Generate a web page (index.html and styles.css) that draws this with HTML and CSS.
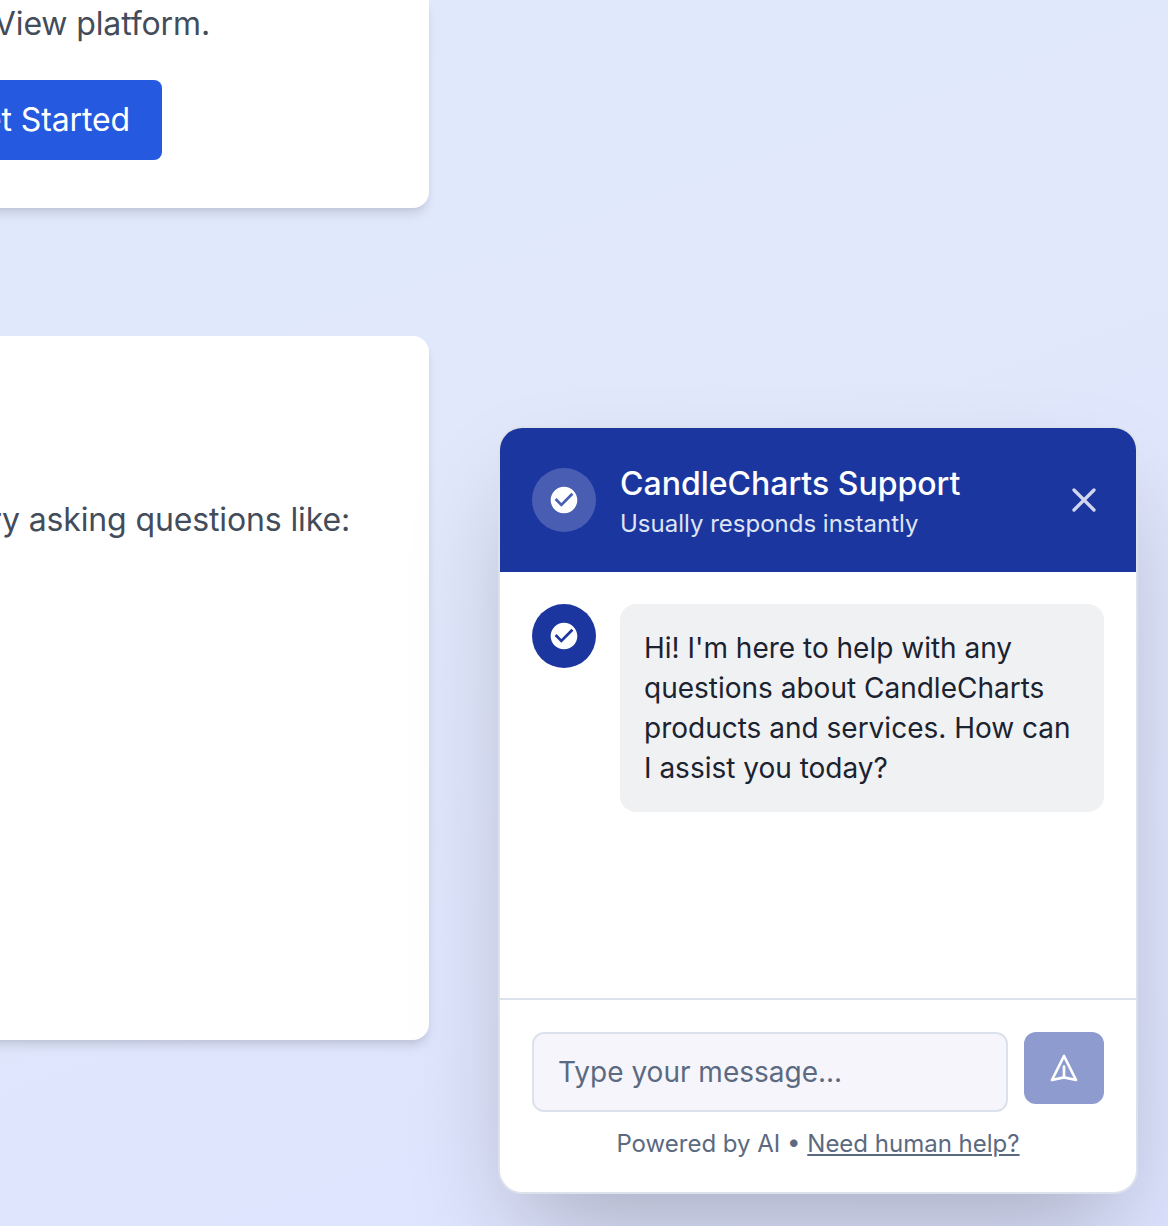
FILE: index.html
```
<!DOCTYPE html>
<html lang="en">
<head>
<meta charset="utf-8">
<title>CandleCharts Support</title>
<link rel="stylesheet" href="styles.css">
</head>
<body>
<main class="page">
  <section class="card card-start">
    <p class="lead platform"><span>View platform.</span></p>
    <div class="cta-row"><a class="cta">Get Started</a></div>
  </section>
  <section class="card card-examples">
    <p class="lead examples"><span>Try asking questions like:</span></p>
  </section>
</main>

<aside class="chat">
  <header class="chat-header">
    <span class="avatar avatar-light">
      <svg width="32" height="32" viewBox="0 0 24 24" fill="currentColor"><path d="M12 2C6.48 2 2 6.48 2 12s4.48 10 10 10 10-4.48 10-10S17.52 2 12 2zm-2 15l-5-5 1.41-1.41L10 14.17l7.59-7.59L19 8l-9 9z"/></svg>
    </span>
    <div class="chat-heading">
      <div class="chat-title">CandleCharts Support</div>
      <div class="chat-subtitle">Usually responds instantly</div>
    </div>
    <button class="close" aria-label="Close">
      <svg width="40" height="40" viewBox="0 0 24 24" fill="none" stroke="currentColor" stroke-width="2" stroke-linecap="round" stroke-linejoin="round"><path d="M6 18L18 6M6 6l12 12"/></svg>
    </button>
  </header>
  <div class="messages">
    <span class="avatar avatar-solid">
      <svg width="32" height="32" viewBox="0 0 24 24" fill="currentColor"><path d="M12 2C6.48 2 2 6.48 2 12s4.48 10 10 10 10-4.48 10-10S17.52 2 12 2zm-2 15l-5-5 1.41-1.41L10 14.17l7.59-7.59L19 8l-9 9z"/></svg>
    </span>
    <p class="bubble">Hi! I'm here to help with any questions about CandleCharts products and services. How can I assist you today?</p>
  </div>
  <footer class="composer">
    <div class="composer-row">
      <input class="message-input" type="text" placeholder="Type your message...">
      <button class="send" aria-label="Send">
        <svg width="32" height="32" viewBox="0 0 24 24" fill="none" stroke="currentColor" stroke-width="2" stroke-linecap="round" stroke-linejoin="round"><path d="M12 19l9 2-9-18-9 18 9-2zm0 0v-8"/></svg>
      </button>
    </div>
    <div class="powered">Powered by AI • <a class="help-link">Need human help?</a></div>
  </footer>
</aside>
</body>
</html>
```
FILE: styles.css
```
* { box-sizing: border-box; }

body {
  margin: 0;
  height: 1226px;
  position: relative;
  overflow: hidden;
  font-family: Inter, "Liberation Sans", sans-serif;
  background: linear-gradient(160deg, #e0e9fc 0%, #e1e8fc 40%, #dde3fe 100%);
}

p { margin: 0; }
button { border: 0; padding: 0; font: inherit; }
svg { display: block; }

.page {
  display: flex;
  flex-direction: column;
  gap: 128px;
  width: 469px;
  margin-left: -40px;
}

.card {
  padding-left: 40px;
  background: #fff;
  box-shadow: 0 8px 12px -2px rgba(0, 0, 0, .1), 0 4px 8px -4px rgba(0, 0, 0, .1);
}

.card-start {
  height: 208px;
  border-radius: 0 0 16px 0;
}

.card-examples {
  height: 704px;
  padding-top: 160px;
  border-radius: 0 16px 16px 0;
}

.lead {
  display: flex;
  justify-content: flex-end;
  font-size: 32px;
  line-height: 48px;
  letter-spacing: -.13px;
  color: #434c5a;
  white-space: nowrap;
}

.platform { width: 210px; }
.examples { width: 350px; }

.cta-row {
  display: flex;
  justify-content: flex-end;
  width: 162px;
  margin-top: 32px;
}

.cta {
  flex: none;
  padding: 16px 32px;
  border-radius: 8px;
  background: #2459e0;
  color: #fff;
  font-size: 32px;
  line-height: 48px;
  letter-spacing: -.13px;
  white-space: nowrap;
}

.chat {
  position: absolute;
  right: 30px;
  bottom: 32px;
  width: 640px;
  height: 768px;
  display: flex;
  flex-direction: column;
  overflow: hidden;
  background: #fff;
  border: 2px solid #dce2ec;
  border-radius: 24px;
  box-shadow: 0 50px 100px -24px rgba(0, 0, 0, .25);
}

.chat-header {
  display: flex;
  align-items: center;
  gap: 24px;
  padding: 32px;
  background: #1c369f;
  color: #fff;
}

.avatar {
  flex: none;
  display: flex;
  align-items: center;
  justify-content: center;
  width: 64px;
  height: 64px;
  border-radius: 50%;
  color: #fff;
}

.avatar-light { background: rgba(255, 255, 255, .2); }
.avatar-solid { background: #1c369f; }

.chat-heading { flex: 1; }

.chat-title {
  font-size: 32px;
  line-height: 48px;
  font-weight: 500;
}

.chat-subtitle {
  font-size: 24px;
  line-height: 32px;
  color: #dfe4f3;
}

.close {
  background: none;
  color: rgba(255, 255, 255, .8);
}

.messages {
  flex: 1;
  display: flex;
  align-items: flex-start;
  gap: 24px;
  padding: 32px;
}

.bubble {
  flex: 1;
  padding: 24px;
  border-radius: 16px;
  background: #f0f1f3;
  color: #1b2230;
  font-size: 28px;
  line-height: 40px;
}

.composer {
  padding: 32px;
  border-top: 2px solid #dce2ec;
}

.composer-row {
  display: flex;
  align-items: flex-start;
  gap: 16px;
}

.message-input {
  flex: 1;
  min-width: 0;
  height: 80px;
  padding: 0 24px;
  border: 2px solid #dce2ec;
  border-radius: 12px;
  background: #f6f5fc;
  font: 28px/40px Inter, "Liberation Sans", sans-serif;
}

.message-input::placeholder {
  color: #5b6a80;
  opacity: 1;
}

.send {
  display: flex;
  align-items: center;
  justify-content: center;
  width: 80px;
  height: 72px;
  border-radius: 12px;
  background: #8e9bcf;
  color: #fff;
}

.powered {
  margin-top: 16px;
  text-align: center;
  font-size: 24px;
  line-height: 32px;
  color: #5b6a80;
}

.help-link { text-decoration: underline; }
```
